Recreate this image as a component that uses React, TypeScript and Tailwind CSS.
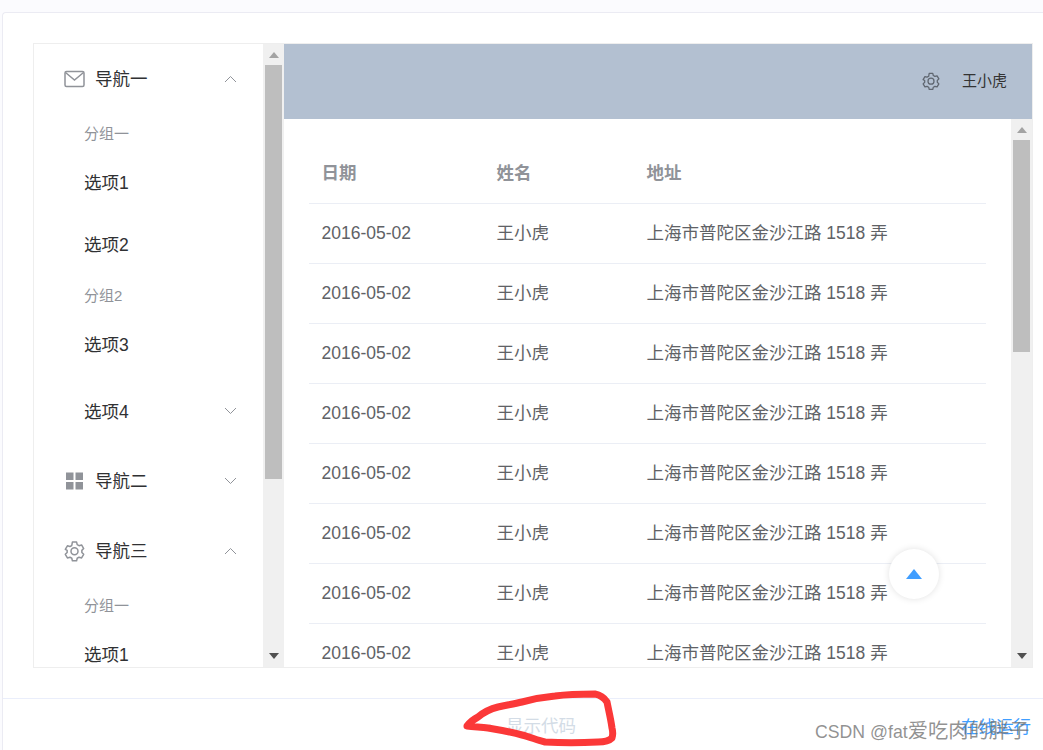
import React from 'react';

const rows = Array.from({ length: 8 });

const Chevron: React.FC<{ up?: boolean }> = ({ up }) => (
    <svg className="ml-auto mr-[26px] h-[8px] w-[13px]" viewBox="0 0 13 8" fill="none" stroke="#909399" strokeWidth="1">
        <polyline points={up ? '1,7 6.5,1.5 12,7' : '1,1 6.5,6.5 12,1'} />
    </svg>
);

const MailIcon = () => (
    <svg className="h-[18px] w-[21px]" viewBox="0 0 21 18" fill="none" stroke="#909399" strokeWidth="1.5">
        <rect x="1" y="1.5" width="19" height="15" rx="1.5" />
        <polyline points="1.5,2.5 10.5,10 19.5,2.5" />
    </svg>
);

const GridIcon = () => (
    <svg className="h-[18px] w-[21px]" viewBox="0 0 21 18" fill="#909399">
        <rect x="2" y="0.5" width="7.5" height="7.5" />
        <rect x="11.5" y="0.5" width="7.5" height="7.5" />
        <rect x="2" y="10" width="7.5" height="7.5" />
        <rect x="11.5" y="10" width="7.5" height="7.5" />
    </svg>
);

const GearIcon: React.FC<{ className: string; color?: string }> = ({ className, color = '#909399' }) => (
    <svg className={className} viewBox="0 0 24 24" fill="none" stroke={color} strokeWidth="1.7" strokeLinejoin="round">
        <path d="M9.6 1.8h4.8l.7 2.9 2.1 1.2 2.9-.8 2.4 4.1-2.1 2.1v2.4l2.1 2.1-2.4 4.1-2.9-.8-2.1 1.2-.7 2.9H9.6l-.7-2.9-2.1-1.2-2.9.8-2.4-4.1 2.1-2.1v-2.4L1.5 10.2l2.4-4.1 2.9.8 2.1-1.2z" />
        <circle cx="12" cy="12.3" r="4" />
    </svg>
);

const Triangle: React.FC<{ up?: boolean; color: string }> = ({ up, color }) => (
    <svg className="h-[6px] w-[10px]" viewBox="0 0 10 6" fill={color}>
        <polygon points={up ? '5,0 10,6 0,6' : '0,0 10,0 5,6'} />
    </svg>
);

const Scrollbar: React.FC<{ thumbTop: number; thumbHeight: number }> = ({ thumbTop, thumbHeight }) => (
    <div className="relative flex h-full w-[21px] shrink-0 flex-col items-center justify-between bg-[#f0f0f0] py-[8px]">
        <Triangle up color="#a3a3a3" />
        <div className="absolute left-[2px] w-[17px] bg-[#bebebe]" style={{ top: thumbTop, height: thumbHeight }} />
        <Triangle color="#505050" />
    </div>
);

const NavTitle: React.FC<{ icon: React.ReactNode; label: string; up?: boolean }> = ({ icon, label, up }) => (
    <div className="flex h-[70px] shrink-0 items-center pl-[30px] text-[17.5px] text-[#303133]">
        <span className="mr-[10px] flex w-[21px] justify-center">{icon}</span>
        <span className="pt-[1px]">{label}</span>
        <Chevron up={up} />
    </div>
);

const Group: React.FC<{ label: string }> = ({ label }) => (
    <div className="flex h-[38px] shrink-0 items-center pl-[50px] pt-[3px] text-[15px] text-[#909399]">{label}</div>
);

const Item: React.FC<{ label: string }> = ({ label }) => (
    <div className="flex h-[62px] shrink-0 items-center pl-[50px] text-[17.5px] text-[#303133]">{label}</div>
);

export default function App() {
    return (
        <div
            className="relative h-[750px] w-[1043px] overflow-hidden bg-[#fbfbfe] pl-[2px] pt-[12px]"
            style={{ fontFamily: '"Liberation Sans", "Noto Sans CJK SC", sans-serif' }}
        >
            <div className="h-[760px] rounded-tl-[4px] border-l border-t border-[#ebebf3] bg-white">
                <div className="p-[30px] pr-[10px]">
                    {/* Demo container */}
                    <div className="flex h-[625px] border border-[#eeeeee]">
                        <aside className="flex w-[250px] shrink-0">
                            <div className="flex min-w-0 flex-1 flex-col overflow-hidden bg-white">
                                <NavTitle icon={<MailIcon />} label="导航一" up />
                                <Group label="分组一" />
                                <Item label="选项1" />
                                <Item label="选项2" />
                                <Group label="分组2" />
                                <Item label="选项3" />
                                <div className="flex h-[70px] shrink-0 items-center pl-[50px] text-[17.5px] text-[#303133]">
                                    <span className="pt-[3px]">选项4</span>
                                    <Chevron />
                                </div>
                                <NavTitle icon={<GridIcon />} label="导航二" />
                                <NavTitle icon={<GearIcon className="h-[22px] w-[22px]" />} label="导航三" up />
                                <Group label="分组一" />
                                <Item label="选项1" />
                            </div>
                            <Scrollbar thumbTop={21} thumbHeight={414} />
                        </aside>

                        <main className="relative flex min-w-0 flex-1 flex-col">
                            <header className="flex h-[75px] shrink-0 items-center justify-end bg-[#b3c0d1] pr-[25px] text-[15px] text-[#333333]">
                                <GearIcon className="mb-[2px] mr-[22px] h-[18px] w-[18px]" color="#5f6670" />
                                王小虎
                            </header>
                            <div className="flex min-h-0 flex-1">
                                <div className="min-w-0 flex-1 overflow-hidden px-[25px] pt-[24px]">
                                    <table className="w-full table-fixed border-collapse text-left text-[17.5px] text-[#606266]">
                                        <thead>
                                            <tr className="h-[60px] border-b border-[#ebeef5]">
                                                <th className="w-[175px] pl-[12.5px] font-bold text-[#909399]">日期</th>
                                                <th className="w-[150px] pl-[12.5px] font-bold text-[#909399]">姓名</th>
                                                <th className="pl-[12.5px] font-bold text-[#909399]">地址</th>
                                            </tr>
                                        </thead>
                                        <tbody>
                                            {rows.map((_, i) => (
                                                <tr key={i} className="h-[60px] border-b border-[#ebeef5]">
                                                    <td className="pl-[12.5px]">2016-05-02</td>
                                                    <td className="pl-[12.5px]">王小虎</td>
                                                    <td className="pl-[12.5px]">上海市普陀区金沙江路 1518 弄</td>
                                                </tr>
                                            ))}
                                        </tbody>
                                    </table>
                                </div>
                                <Scrollbar thumbTop={21} thumbHeight={212} />
                            </div>
                            {/* Back to top */}
                            <div className="absolute left-[605px] top-[505px] flex h-[50px] w-[50px] items-center justify-center rounded-full bg-white shadow-[0_0_7px_rgba(0,0,0,0.12)]">
                                <svg className="h-[10px] w-[16px]" viewBox="0 0 16 10" fill="#409eff">
                                    <polygon points="8,0 16,10 0,10" />
                                </svg>
                            </div>
                        </main>
                    </div>
                </div>

                <div className="relative flex h-[52px] items-center justify-center border-t border-[#eaeefb] pl-[36px]">
                    <span className="absolute left-[481px] top-[25px] h-0 w-0 border-x-[6px] border-b-[7px] border-x-transparent border-b-[#d3dce6]" />
                    <span className="mt-[4px] text-[17.5px] text-[#d3dce6]">显示代码</span>
                    <span className="absolute right-[12px] top-[15px] text-[17.5px] text-[#409eff]">在线运行</span>
                </div>
            </div>

            {/* Red pen scribble over the screenshot */}
            <svg className="absolute left-0 top-0 h-[750px] w-[1043px]" viewBox="0 0 1043 750" fill="none">
                <path
                    d="M467 726 C471 721 474 719 478 717 C484 712 490 709 498 707 C507 705 514 704 522 702 C533 699 544 697 555 696 C570 694 583 694 595 694 C601 695 605 699 607 702 C609 712 611 720 612 728 C613 732 613 735 612 738 C609 741 604 742 598 742 C580 743 562 743 545 742 C537 740 530 737 522 735 C511 732 500 730 488 728 C481 727 474 727 467 726 Z"
                    stroke="#fb3838"
                    strokeWidth="7"
                    strokeLinejoin="round"
                />
            </svg>

            {/* Blog watermark */}
            <div className="absolute left-[815px] top-[719px] whitespace-nowrap text-[20.3px] leading-[24px] text-[#6e6e6e]/75">
                <span className="text-[17.7px]">CSDN @fat</span>爱吃肉的胖子
            </div>
        </div>
    );
}
